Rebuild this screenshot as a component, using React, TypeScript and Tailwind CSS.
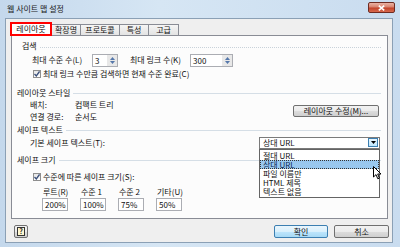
import React from "react"

const btn =
  "flex items-center justify-center rounded-[2px] border border-[#707070] bg-[linear-gradient(#f2f2f2_0%,#ebebeb_50%,#dddddd_51%,#cfcfcf_100%)]"

const Heading = ({ label, dotted, className = "" }: { label: string; dotted?: boolean; className?: string }) => (
  <div className={`flex h-[12px] items-center ${className}`}>
    <span className="whitespace-nowrap">{label}</span>
    {dotted ? (
      <div className="ml-[3px] mt-[3px] flex-1 border-t border-dotted border-[#c9d2da]" />
    ) : (
      <div className="ml-[3px] h-px flex-1 bg-[#d5dee6]" />
    )}
  </div>
)

const Spin = ({ value, w }: { value: string; w: string }) => (
  <div className={`flex h-[13px] border border-[#abadb3] bg-white ${w}`}>
    <span className="flex-1 pl-[2px] leading-[11px]">{value}</span>
    <div className="flex w-[10px] flex-col items-center justify-center gap-[1px] bg-[#e8e8e8]">
      <svg width="5" height="3" viewBox="0 0 5 3">
        <path d="M0 3L2.5 0L5 3Z" fill="#5577aa" />
      </svg>
      <svg width="5" height="3" viewBox="0 0 5 3">
        <path d="M0 0L2.5 3L5 0Z" fill="#5577aa" />
      </svg>
    </div>
  </div>
)

const Check = () => (
  <div className="flex h-[8px] w-[8px] items-center justify-center border border-[#8f8f8f] bg-[linear-gradient(#e6e6e6,#ffffff)]">
    <svg width="6" height="6" viewBox="0 0 6 6">
      <path d="M0.5 3L2.3 5L5.5 0.5" fill="none" stroke="#3a4f7a" strokeWidth="1.3" />
    </svg>
  </div>
)

const Box = ({ value }: { value: string }) => (
  <div className="h-[13px] w-[26px] border border-[#abadb3] bg-white pl-[2px] leading-[11px]">{value}</div>
)

export default function App() {
  const sizes = [
    { label: "루트(R)", value: "200%" },
    { label: "수준 1", value: "100%" },
    { label: "수준 2", value: "75%" },
    { label: "기타(U)", value: "50%" },
  ]
  const options = ["절대 URL", "상대 URL", "파일 이름만", "HTML 제목", "텍스트 없음"]

  return (
    <div className="relative flex h-[247px] w-[400px] flex-col overflow-hidden bg-[linear-gradient(90deg,#c4d8ec,#d6e6f4_40%,#c9dcef)] font-['Noto_Sans_CJK_KR',sans-serif] text-[8px] text-[#111]">
      {/* title bar */}
      <div className="flex h-[18px] items-start justify-between">
        <span className="pl-[7px] pt-[3px] text-[8px] leading-[12px] text-[#1a1a1a]">웹 사이트 맵 설정</span>
        <div className="mr-[5px] mt-[2px] flex h-[11px] w-[27px] items-center justify-center rounded-[2px] border border-[#6e2b22] bg-[linear-gradient(#eab3a5_0%,#d9826e_45%,#c2432b_55%,#d86a4e_100%)]">
          <svg width="7" height="6" viewBox="0 0 7 6">
            <path d="M0.8 0.6L6.2 5.4M6.2 0.6L0.8 5.4" stroke="#ffffff" strokeWidth="1.6" />
          </svg>
        </div>
      </div>

      {/* body */}
      <div className="ml-[5px] mr-[7px] mb-[4px] flex flex-1 flex-col border border-[#8ba0b5] bg-[#efefef]">
        {/* tabs */}
        <div className="mt-[3px] flex h-[13px] items-end pl-[4px]">
          <div className="relative z-10 -mb-px flex h-[14px] w-[42px] items-center justify-center border-2 border-[#ff0000] bg-white leading-[10px]">
            레이아웃
          </div>
          <div className="flex h-[11px] w-[29px] items-center justify-center border border-l-0 border-b-0 border-[#898c95] bg-[linear-gradient(#f5f5f5,#e3e3e3)] leading-[10px]">
            확장명
          </div>
          <div className="flex h-[11px] w-[39px] items-center justify-center border border-l-0 border-b-0 border-[#898c95] bg-[linear-gradient(#f5f5f5,#e3e3e3)] leading-[10px]">
            프로토콜
          </div>
          <div className="flex h-[11px] w-[29px] items-center justify-center border border-l-0 border-b-0 border-[#898c95] bg-[linear-gradient(#f5f5f5,#e3e3e3)] leading-[10px]">
            특성
          </div>
          <div className="flex h-[11px] w-[30px] items-center justify-center border border-l-0 border-b-0 border-[#898c95] bg-[linear-gradient(#f5f5f5,#e3e3e3)] leading-[10px]">
            고급
          </div>
        </div>

        {/* panel */}
        <div className="ml-[5px] flex h-[184px] w-[377px] flex-col border border-[#898c95] bg-[#fcfcfc] pl-[5px] pr-[6px] pt-[4px] leading-[12px]">
          <Heading label="검색" dotted className="pl-[5px]" />

          <div className="mt-[1px] flex h-[14px] items-center pl-[15px]">
            <span className="w-[60px] whitespace-nowrap">최대 수준 수(L)</span>
            <Spin value="3" w="w-[26px]" />
            <span className="ml-[12px] w-[60px] whitespace-nowrap">최대 링크 수(K)</span>
            <Spin value="300" w="w-[43px]" />
          </div>

          <div className="mt-[1px] flex h-[12px] items-center pl-[16px]">
            <Check />
            <span className="ml-[2px] whitespace-nowrap">최대 링크 수만큼 검색하면 현재 수준 완료(C)</span>
          </div>

          <Heading label="레이아웃 스타일" className="mt-[7px]" />

          <div className="flex h-[24px] items-center">
            <div className="flex flex-1 flex-col pl-[13px]">
              <div className="flex h-[12px] items-center">
                <span className="w-[45px]">배치:</span>
                <span>컴팩트 트리</span>
              </div>
              <div className="flex h-[12px] items-center">
                <span className="w-[45px]">연결 경로:</span>
                <span>순서도</span>
              </div>
            </div>
            <div className={`${btn} mr-[2px] h-[12px] w-[86px] leading-[10px]`}>레이아웃 수정(M)...</div>
          </div>

          <Heading label="세이프 텍스트" className="mt-[1px]" />

          <div className="flex h-[13px] items-center pl-[13px]">
            <span className="flex-1">기본 세이프 텍스트(T):</span>
            <div className="relative z-20 mr-[1px] flex h-[12px] w-[121px] items-center border border-[#7a7a7a] bg-white">
              <span className="flex-1 pl-[3px] leading-[10px]">상대 URL</span>
              <div className="mr-px flex h-[9px] w-[10px] items-center justify-center border border-[#3c7fb1] bg-[linear-gradient(#eaf6fd,#bee6fd)]">
                <svg width="5" height="3" viewBox="0 0 5 3">
                  <path d="M0 0L2.5 3L5 0Z" fill="#000000" />
                </svg>
              </div>
              <div className="absolute left-[-1px] top-[11px] flex w-[121px] flex-col border border-[#646464] bg-white py-[1px]">
                {options.map((o, i) => (
                  <div
                    key={o}
                    className={
                      i === 1
                        ? "h-[9px] overflow-hidden border border-dotted border-[#333] bg-[#99c8ef] pl-[2px] leading-[7px] text-[#0b2a55]"
                        : "h-[9px] overflow-hidden pl-[3px] leading-[9px]"
                    }
                  >
                    {o}
                  </div>
                ))}
              </div>
            </div>
          </div>

          <Heading label="세이프 크기" className="mt-[5px]" />

          <div className="mt-[5px] flex h-[12px] items-center pl-[16px]">
            <Check />
            <span className="ml-[2px] whitespace-nowrap">수준에 따른 세이프 크기(S):</span>
          </div>

          <div className="mt-[3px] grid grid-cols-[26px_26px_26px_26px] gap-x-[12px] pl-[25px]">
            {sizes.map((s) => (
              <span key={s.label} className="h-[12px] whitespace-nowrap pl-[1px]">
                {s.label}
              </span>
            ))}
            {sizes.map((s) => (
              <Box key={s.value} value={s.value} />
            ))}
          </div>
        </div>

        {/* bottom buttons */}
        <div className="mt-[6px] flex h-[13px] items-center pl-[8px] pr-[3px]">
          <div className={`${btn} h-[13px] w-[14px]`}>
            <div className="flex h-[9px] w-[8px] items-center justify-center border border-[#333] bg-[#fff7d0] text-[7px] font-bold leading-[7px]">
              ?
            </div>
          </div>
          <div className="flex-1" />
          <div className="flex h-[13px] w-[54px] items-center justify-center rounded-[2px] border border-[#3c7fb1] bg-[linear-gradient(#eaf6fd_0%,#d9f0fc_50%,#bee6fd_51%,#a7d9f5_100%)] leading-[10px]">
            확인
          </div>
          <div className={`${btn} ml-[6px] h-[13px] w-[55px] leading-[10px]`}>취소</div>
        </div>
      </div>

      {/* mouse cursor */}
      <svg className="absolute left-[373px] top-[166px] z-30" width="9" height="14" viewBox="0 0 9 14">
        <path d="M0.5 0.5L0.5 11L3 8.6L4.8 12.8L6.4 12.1L4.7 8L8 8Z" fill="#ffffff" stroke="#000000" strokeWidth="1" />
      </svg>
    </div>
  )
}
